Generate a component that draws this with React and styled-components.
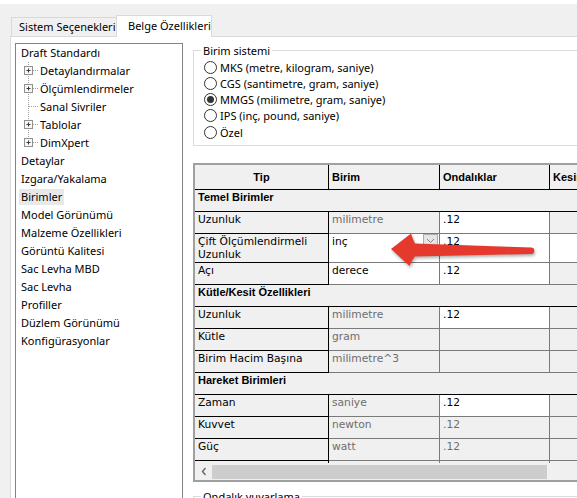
import styled, { createGlobalStyle } from "styled-components";

const UI_FONT = `"Noto Sans", "Open Sans", sans-serif`;
const GRID_FONT = `"DejaVu Sans", Verdana, sans-serif`;
const BOLD_FONT = `"Liberation Sans", Arial, sans-serif`;

const GlobalStyle = createGlobalStyle`
  html, body {
    margin: 0;
    padding: 0;
    background: #f0f0f0;
  }
  * { box-sizing: border-box; }
`;

const Page = styled.div`
  position: relative;
  width: 577px;
  height: 498px;
  overflow: hidden;
  background: #f0f0f0;
  font-family: ${UI_FONT};
  font-size: 11px;
  color: #000;
`;

const WindowEdge = styled.div`
  height: 4px;
  background: #fff;
`;

const TabStrip = styled.div`
  height: 32px;
  display: flex;
  align-items: flex-end;
  padding-left: 11px;
`;

const Tab = styled.div`
  position: relative;
  height: ${({ $active }) => ($active ? 22 : 19)}px;
  width: ${({ $active }) => ($active ? 96 : 105)}px;
  margin-bottom: ${({ $active }) => ($active ? -1 : 0)}px;
  z-index: ${({ $active }) => ($active ? 1 : 0)};
  padding-left: ${({ $active }) => ($active ? 11 : 7)}px;
  line-height: ${({ $active }) => ($active ? 20 : 18)}px;
  background: ${({ $active }) => ($active ? "#fff" : "#f0f0f0")};
  border: 1px solid #d9d9d9;
  border-bottom: none;
  ${({ $active }) => (!$active ? "border-right: none;" : "")}
  white-space: nowrap;
`;

const TabPage = styled.div`
  margin-left: 10px;
  height: 462px;
  display: flex;
  padding: 6px 0 0 4px;
  background: #fff;
  border-top: 1px solid #d9d9d9;
  border-left: 1px solid #d9d9d9;
  overflow: hidden;
`;

/* ---------- tree ---------- */

const Tree = styled.div`
  flex-shrink: 0;
  width: 168px;
  height: 480px;
  border: 1px solid #828282;
  background: #fff;
`;

const TreeRow = styled.div`
  height: 18px;
  display: flex;
  align-items: center;
  padding-left: ${({ $child }) => ($child ? 2 : 3)}px;
`;

const TreeLabel = styled.span`
  height: 16px;
  line-height: 16px;
  padding: 0 2px;
  white-space: nowrap;
  background: ${({ $selected }) => ($selected ? "#e8e8e8" : "transparent")};
`;

const Connector = ({ expandable, last }) => (
  <svg width="20" height="18" style={{ flexShrink: 0 }}>
    <g stroke="#a0a0a0" strokeDasharray="1 1" fill="none">
      <line x1="10.5" y1="0" x2="10.5" y2={last ? 9 : 18} />
      <line x1={expandable ? 15 : 11} y1="8.5" x2="20" y2="8.5" />
    </g>
    {expandable && (
      <g>
        <rect x="6.5" y="4.5" width="8" height="8" fill="#f7f7f7" stroke="#919191" />
        <path d="M8.5 8.5H12.5M10.5 6.5V10.5" stroke="#3a3a3a" />
      </g>
    )}
  </svg>
);

const treeItems = [
  { label: "Draft Standardı" },
  { label: "Detaylandırmalar", child: true, expandable: true },
  { label: "Ölçümlendirmeler", child: true, expandable: true },
  { label: "Sanal Sivriler", child: true },
  { label: "Tablolar", child: true, expandable: true },
  { label: "DimXpert", child: true, expandable: true, last: true },
  { label: "Detaylar" },
  { label: "Izgara/Yakalama" },
  { label: "Birimler", selected: true },
  { label: "Model Görünümü" },
  { label: "Malzeme Özellikleri" },
  { label: "Görüntü Kalitesi" },
  { label: "Sac Levha MBD" },
  { label: "Sac Levha" },
  { label: "Profiller" },
  { label: "Düzlem Görünümü" },
  { label: "Konfigürasyonlar" },
];

/* ---------- right side ---------- */

const RightPane = styled.div`
  flex-shrink: 0;
  width: 400px;
  margin-left: 10px;
`;

const GroupBox = styled.fieldset`
  margin: ${({ $top }) => $top || 0}px 0 0 0;
  padding: 0 0 5px 10px;
  border: 1px solid #dcdcdc;
  min-width: 0;
  min-height: ${({ $minH }) => $minH || 0}px;
`;

const Legend = styled.legend`
  margin-left: -3px;
  padding: 0 2px;
  line-height: 15px;
  font-size: 11px;
`;

const RadioList = styled.div`
  margin-top: 1px;
`;

const RadioRow = styled.div`
  height: 16.25px;
  display: flex;
  align-items: center;
  gap: 3px;
  white-space: nowrap;
`;

const RadioCircle = styled.span`
  width: 13px;
  height: 13px;
  border-radius: 50%;
  border: 1px solid #333;
  background: #fff;
  display: grid;
  place-items: center;

  &::after {
    content: "";
    width: 7px;
    height: 7px;
    border-radius: 50%;
    background: ${({ $checked }) => ($checked ? "#333" : "transparent")};
  }
`;

const unitSystems = [
  { label: "MKS (metre, kilogram, saniye)" },
  { label: "CGS (santimetre, gram, saniye)" },
  { label: "MMGS (milimetre, gram, saniye)", checked: true },
  { label: "IPS (inç, pound, saniye)" },
  { label: "Özel" },
];

/* ---------- grid ---------- */

const GridFrame = styled.div`
  margin-top: 17px;
  width: 400px;
  border: 2px solid #a0a0a0;
  background: #fff;
  font-family: ${GRID_FONT};
  font-size: 10.7px;
`;

const GridViewport = styled.div`
  height: 298px;
  overflow: hidden;
`;

const GridRow = styled.div`
  display: grid;
  grid-template-columns: 134px 111px 110px 110px;
  height: ${({ $h }) => $h || 22}px;
`;

const HeadCell = styled.div`
  background: #f0f0f0;
  border-right: 1px solid #000;
  border-bottom: 1px solid #000;
  padding: 0 3px;
  line-height: 24px;
  text-align: ${({ $center }) => ($center ? "center" : "left")};
  font-family: ${BOLD_FONT};
  font-weight: bold;
  font-size: 11px;
  white-space: nowrap;
  overflow: hidden;
`;

const SectionRow = styled.div`
  height: 22px;
  background: #f0f0f0;
  border-bottom: 1px solid #000;
  padding: 1px 3px 0;
  line-height: 13px;
  font-family: ${BOLD_FONT};
  font-weight: bold;
  font-size: 11px;
  white-space: nowrap;
`;

const Cell = styled.div`
  display: flex;
  justify-content: space-between;
  align-items: flex-start;
  padding: 1px 1px 0 3px;
  line-height: 13px;
  white-space: pre-line;
  overflow: hidden;
  background: ${({ $white }) => ($white ? "#fff" : "#f0f0f0")};
  color: ${({ $muted }) => ($muted ? "#6d6d6d" : "#000")};
  border-right: 1px solid ${({ $key }) => ($key ? "#000" : "#7a7a7a")};
  border-bottom: 1px solid ${({ $key }) => ($key ? "#000" : "#7a7a7a")};
`;

const DropButton = styled.span`
  width: 15px;
  height: 13px;
  margin-top: -1px;
  border: 1px solid #adadad;
  background: #e5e5e5;
  display: grid;
  place-items: center;
`;

const HScroll = styled.div`
  height: 17px;
  display: flex;
  align-items: center;
  background: #f0f0f0;
`;

const ScrollButton = styled.div`
  width: 17px;
  height: 17px;
  display: grid;
  place-items: center;
`;

const ScrollThumb = styled.div`
  width: 335px;
  height: 14px;
  background: #cdcdcd;
`;

const Arrow = styled.svg`
  position: absolute;
  left: 386px;
  top: 228px;
  overflow: visible;
  filter: drop-shadow(1px 2px 1.5px rgba(0, 0, 0, 0.3));
`;

const gridRows = [
  { section: "Temel Birimler" },
  { label: "Uzunluk", unit: "milimetre", unitEdit: false, dec: ".12", decEdit: true },
  { label: "Çift Ölçümlendirmeli\nUzunluk", unit: "inç", unitEdit: true, dropdown: true, dec: ".12", decEdit: true, kesinEdit: true, h: 29 },
  { label: "Açı", unit: "derece", unitEdit: true, dec: ".12", decEdit: true },
  { section: "Kütle/Kesit Özellikleri" },
  { label: "Uzunluk", unit: "milimetre", dec: ".12", decEdit: true },
  { label: "Kütle", unit: "gram", dec: "" },
  { label: "Birim Hacim Başına", unit: "milimetre^3", dec: "" },
  { section: "Hareket Birimleri" },
  { label: "Zaman", unit: "saniye", dec: ".12", decEdit: true },
  { label: "Kuvvet", unit: "newton", dec: ".12" },
  { label: "Güç", unit: "watt", dec: ".12" },
  { label: "Enerji", unit: "joule", dec: ".12" },
];

const UnitsGrid = () => (
  <GridFrame>
    <GridViewport>
      <GridRow $h={25}>
        <HeadCell $center>Tip</HeadCell>
        <HeadCell>Birim</HeadCell>
        <HeadCell>Ondalıklar</HeadCell>
        <HeadCell>Kesir</HeadCell>
      </GridRow>
      {gridRows.map((row, i) =>
        row.section ? (
          <SectionRow key={i}>{row.section}</SectionRow>
        ) : (
          <GridRow key={i} $h={row.h}>
            <Cell $key>{row.label}</Cell>
            <Cell $white={row.unitEdit} $muted={!row.unitEdit}>
              {row.unit}
              {row.dropdown && (
                <DropButton>
                  <svg width="9" height="6" viewBox="0 0 9 6">
                    <path d="M1 1l3.5 3.5L8 1" stroke="#888" fill="none" />
                  </svg>
                </DropButton>
              )}
            </Cell>
            <Cell $white={row.decEdit} $muted={!row.decEdit}>{row.dec}</Cell>
            <Cell $white={row.kesinEdit} />
          </GridRow>
        )
      )}
    </GridViewport>
    <HScroll>
      <ScrollButton>
        <svg width="6" height="9" viewBox="0 0 6 9">
          <path d="M4.5 1L1.5 4.5 4.5 8" stroke="#606060" strokeWidth="1.3" fill="none" />
        </svg>
      </ScrollButton>
      <ScrollThumb />
    </HScroll>
  </GridFrame>
);

const App = () => (
  <Page>
    <GlobalStyle />
    <WindowEdge />
    <TabStrip>
      <Tab>Sistem Seçenekleri</Tab>
      <Tab $active>Belge Özellikleri</Tab>
    </TabStrip>
    <TabPage>
      <Tree>
        {treeItems.map((item) => (
          <TreeRow key={item.label} $child={item.child}>
            {item.child && <Connector expandable={item.expandable} last={item.last} />}
            <TreeLabel $selected={item.selected}>{item.label}</TreeLabel>
          </TreeRow>
        ))}
      </Tree>
      <RightPane>
        <GroupBox>
          <Legend>Birim sistemi</Legend>
          <RadioList>
            {unitSystems.map((u) => (
              <RadioRow key={u.label}>
                <RadioCircle $checked={u.checked} />
                {u.label}
              </RadioRow>
            ))}
          </RadioList>
        </GroupBox>
        <UnitsGrid />
        <GroupBox $top={7} $minH={60}>
          <Legend>Ondalık yuvarlama</Legend>
        </GroupBox>
      </RightPane>
    </TabPage>
    <Arrow width="152" height="42" viewBox="0 0 152 42">
      <path
        d="M5 21L25 5.5Q26.5 10.5 29 15.5L145 19.5A3.25 3.25 0 0 1 145 26L29 28.5Q25.5 32.5 23.5 38Z"
        fill="#e5392e"
      />
    </Arrow>
  </Page>
);

export default App;
